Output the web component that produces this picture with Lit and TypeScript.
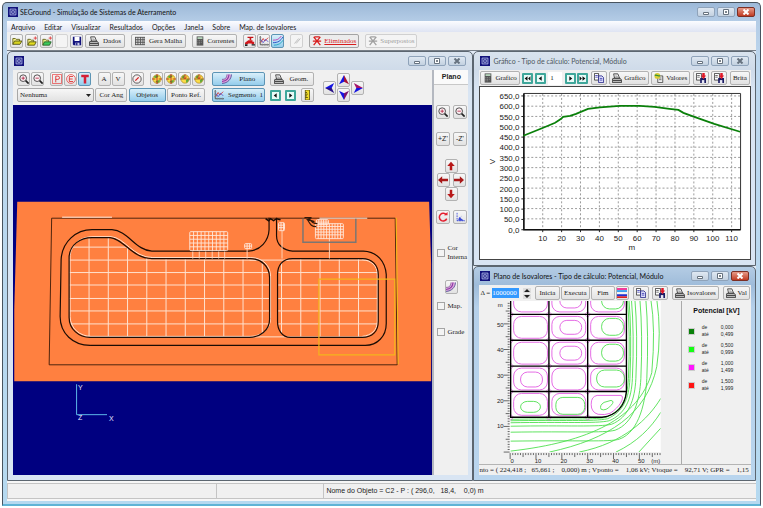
import { LitElement, html, svg, css, nothing } from "lit";
import { customElement, property } from "lit/decorators.js";
import { classMap } from "lit/directives/class-map.js";

const glyphs: Record<string, unknown> = {
  app: svg`<rect width="12" height="12" fill="#12127c"/><path d="M2.5 2.5h7v7h-7z M4.5 4.5h3v3h-3z" fill="none" stroke="#b9c4f0"/>`,
  open: svg`<path d="M1 10V3h3l1 1h4v2" fill="#f4f08a" stroke="#5c5a10"/><path d="M1 10l2-4h9l-2.500 4z" fill="#d8d420" stroke="#4c4a10"/>`,
  openNew: svg`<path d="M1 11V4h3l1 1h3v2" fill="#f4f08a" stroke="#5c5a10"/><path d="M1 11l2-4h8l-2 4z" fill="#e4de20" stroke="#4c4a10"/><path d="M8 2.500h4M10 .5v4" stroke="#e03838"/>`,
  openAdd: svg`<path d="M1 11V4h3l1 1h3v2" fill="#e8f08a" stroke="#5c5a10"/><path d="M1 11l2-4h8l-2 4z" fill="#3ccb5c" stroke="#205c20"/><path d="M8 2.500h4M10 .5v4" stroke="#e03838"/>`,
  save: svg`<path d="M1 1h10v10H2L1 10z" fill="#12127c"/><path d="M3 1h6v5H3z" fill="#fff"/><path d="M4 8h5v3H4z" fill="#c9cce8"/><path d="M5 8h1.500v3H5z" fill="#12127c"/>`,
  printer: svg`<path d="M3 6L2 1h5l2 5z" fill="#fff" stroke="#333"/><path d="M3.500 2.500h3M4 4.200h3" stroke="#777" stroke-width=".7"/><path d="M1 6.500h9l1.500 2v3h-11v-3z" fill="#b8b8b8" stroke="#333"/><path d="M1 9h10" stroke="#333"/>`,
  mesh: svg`<path d="M0 1h12v10H0z" fill="#555"/><path d="M1 2h2v2H1zM4 2h2v2H4zM7 2h2v2H7zM10 2h1.500v2H10zM1 5h2v2H1zM4 5h2v2H4zM7 5h2v2H7zM10 5h1.500v2H10zM1 8h2v2H1zM4 8h2v2H4zM7 8h2v2H7zM10 8h1.500v2H10z" fill="#d6d6d6"/>`,
  calc: svg`<path d="M2 .5h8v11H2z" fill="#555"/><path d="M3 1.500h6v2H3z" fill="#bfe0c4"/><path d="M3 5h1v1H3zM5 5h1v1H5zM7 5h1v1H7zM3 7h1v1H3zM5 7h1v1H5zM7 7h1v1H7zM3 9h1v1H3zM5 9h1v1H5z" fill="#999"/>`,
  tap: svg`<path d="M3 1h7v1.500H7.500V5h-2V2.500H3z" fill="#c4161a"/><path d="M4 5h5v2h2v3H8V9H4l-1 1H0V8z" fill="#d0181c"/><path d="M0 10h3v2H0zM8 10h4v1.500H8z" fill="#222"/>`,
  chart: svg`<path d="M1.500 0v10.500H12" stroke="#444" fill="none"/><path d="M2 8l3-5 2 3 4-4" stroke="#d83030" fill="none"/><path d="M2 4l3 4 3-4 3 3" stroke="#4848c8" fill="none"/><path d="M0 2h3M0 5h3M0 8h3M4 9v3M7 9v3M10 9v3" stroke="#888" stroke-width=".6"/>`,
  curves: svg`<path d="M0 5C5 5 7 4 10 0" stroke="#c030b0" fill="none"/><path d="M0 8C6 8 9 6 12 1" stroke="#1840c0" fill="none"/><path d="M1 11c5 0 9-2 11-6" stroke="#18a0c0" fill="none"/>`,
  pencil: svg`<path d="M3 9l5-6M5 9l5-6" stroke="#b4b4b4" fill="none"/>`,
  strike: svg`<path d="M2 1l8 10M10 1L2 11M1 6h10M3 1h6" stroke="currentColor" stroke-width="1.500" fill="none"/>`,
  zoomIn: svg`<circle cx="5" cy="5" r="4" fill="#fbeef2" stroke="#333"/><path d="M8 8l3.500 3.500" stroke="#222" stroke-width="2"/><path d="M5 3v4M3 5h4" stroke="#b02040"/>`,
  zoomOut: svg`<circle cx="5" cy="5" r="4" fill="#fbeef2" stroke="#333"/><path d="M8 8l3.500 3.500" stroke="#222" stroke-width="2"/><path d="M3 5h4" stroke="#b02040"/>`,
  boxP: svg`<path d="M.5.5h11v11H.5z" fill="none" stroke="#e85050"/><path d="M4.500 10V2.500H7a2 2 0 010 4H4.500" fill="none" stroke="#e02828"/>`,
  ringE: svg`<circle cx="6" cy="6" r="5.300" fill="none" stroke="#e85050"/><path d="M8.500 3H4v6h4.500M4 6h4" fill="none" stroke="#e02828"/>`,
  heavyT: svg`<path d="M1.500 1h9v3h-3v7.500h-3V4h-3z" fill="#d42036"/>`,
  gauge: svg`<circle cx="6" cy="6" r="5" fill="#f7eeee" stroke="#444"/><path d="M4 8l4-4" stroke="#d02020" stroke-width="1.500"/>`,
  globeV: svg`<circle cx="6" cy="6" r="5" fill="#fbdc48" stroke="#a07818" stroke-width=".7"/><path d="M2 4c2-3 5-3 6-1L5 5zM4 9c2-1 4-2 6-1L7 11z" fill="#5fa83a"/><path d="M6 0v12" stroke="#c01818"/><path d="M0 6h4M12 6H8" stroke="#b02c10" fill="none"/>`,
  globeH: svg`<circle cx="6" cy="6" r="5" fill="#fbdc48" stroke="#a07818" stroke-width=".7"/><path d="M2 4c1-2 3-3 4-2L4 6zM7 8c1-2 3-2 4-1L8 11z" fill="#5fa83a"/><path d="M0 6h12" stroke="#8a3a10" stroke-width=".8"/><path d="M6 0v5M4 3l2 3 2-3" stroke="#c01818" fill="none" stroke-width=".8"/>`,
  slab: svg`<path d="M0 6.500C4 6.500 5.500 5 6 .5h5.500c0 6-5 11-11.500 11z" fill="#e3a8dc"/><path d="M0 6.500C4 6.500 5.500 5 6 .5" stroke="#6a3a8a" stroke-width=".8" fill="none"/><path d="M0 9C5 8.500 8 5.500 8.500.5" stroke="#8a3ca8" stroke-width="1.300" fill="none"/><path d="M0 11.300C7 11 11.300 6 11.300.5" stroke="#34408c" stroke-width=".9" fill="none"/>`,
  ruler: svg`<path d="M4 0h5v12H4z" fill="#f0dc28" stroke="#5c5410"/><path d="M4 3h2M4 5h3M4 7h2M4 9h3" stroke="#4c4410"/>`,
  navUp: svg`<path d="M6 0l6 11-6-3z" fill="#a51238"/><path d="M6 0L0 11l6-3z" fill="#1414e0"/>`,
  navDown: svg`<path d="M6 12L0 1l6 3z" fill="#1414e0"/><path d="M6 12l6-11-6 3z" fill="#7a1270"/>`,
  navLeft: svg`<path d="M0 6l11-6-3 6z" fill="#1414e0"/><path d="M0 6l11 6-3-6z" fill="#281088"/>`,
  navRight: svg`<path d="M12 6L1 0l3 6z" fill="#a51268"/><path d="M12 6L1 12l3-6z" fill="#1414e0"/>`,
  redUp: svg`<path d="M6 1l4.500 5H7.500V11h-3V6h-3z" fill="#b81818"/>`,
  redDown: svg`<path d="M6 11l4.500-5H7.500V1h-3v5h-3z" fill="#b81818"/>`,
  redLeft: svg`<path d="M0 6l5-4.500v3h7v3H5v3z" fill="#a81818"/>`,
  redRight: svg`<path d="M12 6L7 1.500v3H0v3h7v3z" fill="#a81818"/>`,
  refresh: svg`<path d="M10 3.500A4.600 4.600 0 1010.500 8" fill="none" stroke="#e42030" stroke-width="1.800"/><path d="M7 4h4.500V0z" fill="#e42030"/>`,
  axes: svg`<path d="M2.500 1v9.500H12M2.500 10.500l5-5" fill="none" stroke="#3848d8" stroke-dasharray="2 1"/><path d="M5 6l6 4.500H4z" fill="#3848d8"/>`,
  prev: svg`<path d="M8 2v8L3 6z" fill="#111"/>`,
  next: svg`<path d="M4 2v8l5-4z" fill="#111"/>`,
  first: svg`<path d="M6 2v8L1 6zM11 2v8L7 6z" fill="#111"/>`,
  last: svg`<path d="M6 2v8l5-4zM1 2v8l4-4z" fill="#111"/>`,
  copy: svg`<path d="M.5.5h5v8h-5z" fill="#fff" stroke="#333"/><path d="M1.500 3h3M1.500 5h3M7 6h3M7 8h3" stroke="#3838b0"/><path d="M5.500 3.500h4l2 2v6h-6z" fill="#dfe0fa" stroke="#24248c"/><path d="M7 6.500h3M7 8.500h3" stroke="#3838b0"/>`,
  export: svg`<path d="M.5.5h6v8h-6z" fill="#fff" stroke="#333"/><path d="M1.500 3h3M1.500 5h3" stroke="#555"/><path d="M5 6h7v6H5z" fill="#1c1c64"/><path d="M7 8.500h3V12H7z" fill="#e8e8f4"/><path d="M7.500 0h3v3H12L9 7.500 6 3h1.500z" fill="#e01828"/>`,
  pages: svg`<path d="M4.500 3.500h6v8h-6z" fill="#eee" stroke="#444"/><path d="M6 6h3M6 8h3" stroke="#666"/><circle cx="4" cy="3.500" r="3.500" fill="#d8cc34"/><path d="M1 3c2-2 4 2 6 0" stroke="#2c8c3c" fill="none" stroke-width="1.500"/>`,
  bands: svg`<path d="M0 0h12v2.500H0z" fill="#f03c9c"/><path d="M0 2.500h12V5H0z" fill="#3ca0f0"/><path d="M0 5h12v2.500H0z" fill="#f4f4f4"/><path d="M0 7.500h12V10H0z" fill="#2030d0"/><path d="M0 10h12v2H0z" fill="#e02020"/>`,
};

const icon = (name: string) =>
  html`<svg class="icon" viewBox="0 0 12 12" aria-hidden="true">${glyphs[name]}</svg>`;

const shared = css`
  * { box-sizing: border-box; }
  .icon { width: 10px; height: 10px; flex: none; display: block; }
  button, input, select { font: inherit; color: inherit; margin: 0; }
  .btn {
    height: 14px; padding: 0 3px; flex: none;
    display: inline-flex; align-items: center; justify-content: center; gap: 4px;
    border: 1px solid #b2b2b2; border-radius: 2px;
    background: linear-gradient(#f7f7f7, #e2e2e2);
    font: 7px/10px "Liberation Serif", serif; color: #222; white-space: nowrap;
  }
  .btn.sq { width: 13px; padding: 0; }
  .btn.on { background: linear-gradient(#d9effa, #94cdec); border-color: #5d95b5; }
  .btn.nav { width: 11px; height: 11px; padding: 0; background: #e9fbf8; border: 2px solid #3fa79b; border-radius: 1px; }
  .btn.nav .icon { width: 7px; height: 7px; }
`;

@customElement("frame-controls")
class FrameControls extends LitElement {
  @property({ type: Boolean }) active = false;
  static styles = [shared, css`
    :host { display: flex; gap: 2px; }
    button { width: 18px; height: 10px; padding: 0; display: grid; place-items: center;
      border: 1px solid #8fa3ba; border-radius: 2px; background: linear-gradient(#dfe8f2, #c3d1e0); }
    .close.active { background: linear-gradient(#e79a88, #c03a22); border-color: #7c2f24; }
    svg { width: 8px; height: 6px; display: block; }
  `];
  render() {
    return html`
      <button aria-label="Minimizar"><svg viewBox="0 0 8 6"><path d="M1.500 3.500h5v2h-5z" fill="#fff" stroke="#66727f"/></svg></button>
      <button aria-label="Maximizar"><svg viewBox="0 0 8 6"><path d="M1.500.5h5v5h-5z" fill="#fff" stroke="#66727f"/><path d="M3.500 2.500h1v1h-1z" stroke="#66727f"/></svg></button>
      <button aria-label="Fechar" class=${classMap({ close: true, active: this.active })}><svg viewBox="0 0 8 6"><path d="M1.500.5l5 5M6.500.5l-5 5" stroke=${this.active ? "#fff" : "#66727f"} stroke-width="2"/></svg></button>`;
  }
}

@customElement("child-window")
class ChildWindow extends LitElement {
  @property() heading = "";
  @property({ type: Boolean, reflect: true }) active = false;
  static styles = [shared, css`
    :host { display: flex; flex-direction: column; min-width: 0; min-height: 0;
      border: 1px solid #5c6670; border-radius: 5px 5px 0 0; padding: 0 4px 5px 5px;
      background: linear-gradient(#d9e3ee, #cfdbe9 18px, #d9e5f3 40px); }
    :host([active]) { background: linear-gradient(#b4cce4, #9fbcda 18px, #b5d0ea 40px, #b9d5ee); }
    header { height: 18px; flex: none; display: flex; align-items: center; gap: 3px; padding: 0 2px 0 1px;
      font: 7px/10px Lato, "Open Sans", sans-serif; color: #4c5660; }
    :host([active]) header { color: #111; }
    .name { flex: 1; min-width: 0; white-space: nowrap; overflow: hidden; }
    .body { flex: 1; min-height: 0; display: flex; flex-direction: column; background: #f0f0f0; }
  `];
  render() {
    return html`<header>${icon("app")}<span class="name">${this.heading}</span>
      <frame-controls ?active=${this.active}></frame-controls></header>
      <div class="body"><slot></slot></div>`;
  }
}

const span = (from: number, to: number, step: number) => {
  const out: number[] = [];
  for (let v = from; v <= to; v += step) out.push(v);
  return out;
};

const hatch = (x: number, y: number, w: number, h: number, step: number) => svg`
  <g stroke="#ffe9dc" stroke-width=".9" fill="none">
    <rect x=${x} y=${y} width=${w} height=${h} rx="1"/>
    ${span(x + step, x + w - 1, step).map((v) => svg`<path d="M${v} ${y}v${h}"/>`)}
    ${span(y + step, y + h - 1, step).map((v) => svg`<path d="M${x} ${v}h${w}"/>`)}
  </g>`;

const leftBay = "M90 338C79 338 69 330 69 318V257C70 245 80 238 92 238H110C124 239 132 259 152 259H250C262 259 270 267 270 278V320C270 331 260 338 250 338Z";
const rightBay = "M293 259H363C373 259 379 266 379 275V322C379 332 373 338 363 338H291C282 338 278 330 278 322V275C278 266 283 259 293 259Z";

const sitePlan = () => svg`
  <path d="M17 202H430L432 265V382H14V310Z" fill="#ff8040"/>
  <path d="M51.500 218.500H396L398 365.500H49L51.500 218.500Z" fill="none" stroke="#3a1a08" stroke-width=".9"/>
  <path d="M62 217.500H112M320 218.500H368" stroke="#ffeee4"/>
  <clipPath id="bays"><path d=${leftBay}/><path d=${rightBay}/></clipPath>
  <g stroke="#ffe1cf" clip-path="url(#bays)">
    ${span(89, 378, 19.3).map((x) => svg`<path d="M${x} 232V338"/>`)}
    ${[247.5, 260.5, 273, 285.5, 299, 311.5, 324.5, 337.5].map((y) => svg`<path d="M66 ${y}H380"/>`)}
  </g>
  <g fill="none" stroke="#ffe1cf"><path d=${leftBay} transform="translate(1 -1)"/><path d="M363 260C372 261 378 266 378 275V322C378 331 372 336 363 337"/><path d="M250 337.500H290M250 260.500H290"/></g>
  <g fill="none" stroke="#1c0c04" stroke-width="1.200">
    <path d="M90 346C73 346 60 334 60 317L61 260C62 242 76 230 92 230H112C128 231 136 251 152 251.500H249C261 251 269 241 269.500 230V218"/>
    <path d="M277 218V236C277 245 284 251 293 251.500H364C378 252 386 262 387 275V324C387 337 378 346 366 346H90"/>
    <path d=${leftBay}/><path d=${rightBay}/>
    <path d="M266 219l3 2 2-2 3 2 3-2 4 1" stroke-width="1.500"/>
  </g>
  ${hatch(190, 232, 38, 19, 3.8)}
  <path d="M193 252V259M199.500 252V259M206 252V259M212.500 252V259M219 252V259M225 252V259M247.500 249V259M282.500 231V259M330 239V259" stroke="#ffd0b4"/>
  ${hatch(245, 244, 7, 5, 2.5)}${hatch(279, 223, 6, 8, 2.5)}
  ${hatch(316, 224, 28, 15, 2.8)}${hatch(317, 220, 12, 5, 2.4)}
  <path d="M303.500 219V242.500H356.500V219" fill="none" stroke="#7c7672" stroke-width="1.500"/>
  <path d="M305 218h7l-4 2 7 2-6-2M308 220c3 5 4 7 9 7M310 219c2 4 4 5 8 5" fill="none" stroke="#33190a" stroke-width="1.200"/>
  <path d="M319.500 279.500H395.500V355.500H319.500ZM397 218L399 365" fill="none" stroke="#f4b41c" stroke-width="1.200"/>
  <path d="M76.500 385V415.500H107" fill="none" stroke="#5cb8e8"/>
  <g class="axisName"><text x="78" y="391">Y</text><text x="78" y="421">Z</text><text x="109" y="422">X</text></g>`;

const profile = () => svg`
  <g stroke="#9a9a9a" stroke-dasharray="2 2">
    ${span(0, 12, 1).map((i) => svg`<path d="M523 ${97 + i * 10.3}H741"/>`)}
    ${span(1, 11, 1).map((i) => svg`<path d="M${523.500 + i * 19} 95V231"/>`)}
  </g>
  <path d="M523.500 94.500H741.500V231.500H523.500Z" fill="none" stroke="#333"/>
  <path d="M523.500 94.500V231.500H741.500" fill="none" stroke="#111" stroke-width="1.500"/>
  <g class="tick end">
    ${span(0, 13, 1).map((i) => svg`<path d="M521 ${97 + i * 10.35}h2" stroke="#222"/><text x="519" y=${100 + i * 10.35}>${650 - i * 50},0</text>`)}
  </g>
  <g class="tick mid">
    ${span(1, 11, 1).map((i) => svg`<path d="M${523.500 + i * 19} 231v3" stroke="#222"/><text x=${523.500 + i * 19} y="243">${i * 10}</text>`)}
    <text x="632" y="252">m</text>
    <text transform="rotate(-90 495 163)" x="495" y="163">V</text>
  </g>
  <path d="M523 137L543 129L555 124L561 120L563 118L570 117L576 115L588 110L600 108.500L620 107L640 107L655 108L670 110L679 111L684 114L695 118L715 125L741 133" fill="none" stroke="#0a800a" stroke-width="1.800"/>`;

const cellsX = [511, 549.5, 588.5, 627.5];
const cellsY = [289, 315.5, 341.5, 367.5, 393, 419];
const loop = (x: number, y: number, w: number, h: number, r: number, c: string) =>
  svg`<rect x=${x} y=${y} width=${w} height=${h} rx=${r} stroke=${c}/>`;

const contours = () => {
  const pink = "#e25ae2", green = "#4ee04e";
  const outer: [number, number][] = [[421, 628.5], [422.5, 630], [424.5, 632.5], [428, 636], [434, 641], [443, 647]];
  return svg`
  <path d="M510 302H662V454H510Z" fill="#fff"/>
  <clipPath id="field"><path d="M510 302H662V454H510Z"/></clipPath>
  <g clip-path="url(#field)" fill="none">
    <g stroke=${green} stroke-width=".9">
      ${outer.map(([l, r]) => svg`<path d="M511 ${l}C${560 + (r - 628)} ${l - 1} ${592 + (r - 628)} ${l + 1} ${607 + (r - 628) * 0.7} ${l - 2}C${622 + (r - 628)} ${l - 9} ${r} 401 ${r + 1} 380Q${r + 3} 335 ${r} 300"/>`)}
      <path d="M511 453C590 444 640 420 653 374Q657 330 652 300M550 454C610 441 648 416 658 368Q663 335 658 300M580 454C625 445 650 420 662 400M617 454C638 444 652 430 662 414M640 454L662 430"/>
    </g>
    <g stroke-width=".9">
      ${cellsY.slice(0, 5).map((y, row) => cellsX.slice(0, 3).map((x, col) => {
        const outline = row === 4 && col === 2
          ? svg`<path d="M598 397H622C626 398 622 408 611 415Q606 417 599 416Q592 414 592 406Q592 398 598 397Z" stroke=${pink}/>
                <path d="M602 411Q600 407 605 404L612 402Q616 403 612 407Q607 413 602 411Z" stroke=${green}/>`
          : svg`${loop(x + 3, y + 2, 34, 22, 8, pink)}
              ${row === 4 ? loop(x + (col ? 7 : 10), y + (col ? 6 : 10), col ? 29 : 20, col ? 17 : 11, 7, green)
                : col === 2 ? loop(x + (row === 3 ? 9 : 14), y + 4, row === 3 ? 28 : 22, 17, 8, green)
                : col === 1 ? (row === 3 ? nothing : loop(x + 11, y + 6, 22, 14, 7, pink))
                : row === 3 ? loop(x + 10, y + 6, 22, 15, 7, pink) : nothing}`;
        return outline;
      }))}
    </g>
    ${cellsX.slice(0, 3).map((x) => cellsY.slice(1).map((y) => svg`<path d="M${x} ${y - 3}L${x + 3} ${y}L${x} ${y + 3}L${x - 3} ${y}Z" stroke=${pink} stroke-width=".7"/>`))}
    <path d="M511 302V419H603C617 417 626 408 627.500 393V302M549.500 302V419M588.500 302V419M511 315.500H627.500M511 341.500H627.500M511 367.500H627.500M511 393H627.500" stroke="#000" stroke-width="1.400"/>
  </g>
  <g stroke="#444" stroke-width=".8">
    ${span(0, 58, 1).map((i) => { const n = i % 10 === 0 ? 6 : i % 5 === 0 ? 4 : 2; return svg`<path d="M${510.500 + i * 2.6} 455v${n}M510 ${454 - i * 2.58}h${-n}"/>`; })}
  </g>
  <g class="scale end">
    ${[50, 40, 30, 20, 10].map((n, i) => svg`<text x="504" y=${328 + i * 25.5}>${n}</text>`)}
    <text x="503" y="308">m</text>
  </g>
  <g class="scale mid">
    ${span(0, 5, 1).map((i) => svg`<text x=${512.500 + i * 26} y="465">${i * 10}</text>`)}
    <text x="657" y="465">(m)</text>
  </g>`;
};

const legend = [
  ["#0a800a", "0,000", "0,499"],
  ["#14ff14", "0,500", "0,999"],
  ["#ff14ff", "1,000", "1,499"],
  ["#ff1414", "1,500", "1,999"],
];

@customElement("app-root")
class AppRoot extends LitElement {
  static styles = [shared, css`
    :host { display: flex; height: 100vh; box-sizing: border-box; padding: 2px; background: #fff;
      font: 7px/10px "Liberation Serif", serif; color: #222; }
    .frame { flex: 1; min-width: 0; display: flex; flex-direction: column; padding: 0 4px 3px;
      border: 1px solid #48545f; border-bottom: 2px solid #5fb4d6; border-radius: 5px 5px 0 0;
      background: linear-gradient(#9db9d8, #b4cce6 18px, #bdd7ee 60px, #b5d9f0); }
    .title { height: 18px; flex: none; display: flex; align-items: center; gap: 2px; padding: 0 1px; font: 7px/10px Lato, "Open Sans", sans-serif; color: #111; }
    .title .name { flex: 1; }
    .menu { height: 11px; flex: none; display: flex; align-items: center; gap: 9px; padding: 0 4px; background: linear-gradient(#fbfcff, #dfe4f3); font: 7px/10px Lato, "Open Sans", sans-serif; }
    .menu a { color: #1a1a1a; text-decoration: none; }
    .tools { height: 18px; flex: none; display: flex; align-items: center; gap: 6px; padding: 0 3px; background: #f0f0f0; overflow: hidden; }
    .tools .snug { gap: 2px; padding: 0 2px; }
    .set { display: flex; gap: 1px; align-items: center; flex: none; }
    .set.wide { gap: 2px; }
    .blank { background: #f4f4f4; border-color: #d4d4d4; }
    .gone { color: #d81c1c; text-decoration: underline; background: #ececec; border-color: #a4a4a4; }
    .dim { color: #a0a0a0; border-color: #d0d0d0; background: #f4f4f4; }
    .desk { flex: 1; display: grid; grid-template-columns: minmax(0, 467fr) minmax(0, 283fr); grid-template-rows: repeat(2, minmax(0, 1fr)); min-height: 0;
      border-top: 1px solid #777f88; background: #e2ebf6; }
    .plan { grid-row: 1 / 3; }
    .split { flex: 1; min-height: 0; display: flex; }
    .main { flex: 1; min-width: 0; display: flex; flex-direction: column; border-right: 2px solid #b4b8c0; }
    .bar { height: 35px; flex: none; display: flex; gap: 7px; padding: 2px 4px; }
    .rows { display: flex; flex-direction: column; gap: 2px; }
    .line { display: flex; justify-content: space-between; align-items: center; }
    .first { width: 188px; }
    .second { width: 102px; }
    .long { width: 53px; }
    .combo { display: grid; align-items: center; }
    .combo > * { grid-area: 1 / 1; }
    .combo select { appearance: none; width: 77px; height: 14px; border: 1px solid #a8a8a8; border-radius: 2px; background: linear-gradient(#f7f7f7, #e2e2e2); padding: 0 2px; }
    .combo svg { width: 5px; height: 3px; justify-self: end; margin-right: 3px; pointer-events: none; }
    .pad { display: grid; grid-template-columns: repeat(3, 14px); align-items: center; margin-left: 2px; }
    .pad .up { grid-area: 1 / 2; } .pad .down { grid-area: 2 / 2; }
    .pad .left { grid-area: 1 / 1 / 3; } .pad .right { grid-area: 1 / 3 / 3; }
    .canvas { flex: 1; min-height: 0; background: #000080; display: flex; }
    .canvas svg, .graph svg, .field svg { width: 100%; height: 100%; display: block; }
    .axisName text { font: 7px "Liberation Sans", sans-serif; fill: #e6e6ff; }
    .side { width: 34px; flex: none; display: flex; flex-direction: column; align-items: center; }
    .tab { width: 100%; height: 15px; background: #fafafa; border-bottom: 1px solid #c8c8c8; margin: 0 0 20px; text-align: center; font: bold 7px/14px "Liberation Sans", sans-serif; }
    .pair { display: flex; gap: 3px; margin-bottom: 13px; }
    .pair .btn { width: 14px; padding: 0; font-family: "Liberation Sans", sans-serif; }
    .cross { display: grid; grid-template-columns: repeat(4, 8px); justify-items: center; margin-bottom: 9px; }
    .cross .up { grid-area: 1 / 2 / 2 / 4; } .cross .down { grid-area: 3 / 2 / 4 / 4; }
    .cross .left { grid-area: 2 / 1 / 3 / 3; } .cross .right { grid-area: 2 / 3 / 3 / 5; }
    .check { align-self: stretch; display: flex; align-items: center; gap: 2px; padding-left: 3px; line-height: 9px; min-height: 10px; }
    .check input { appearance: none; width: 8px; height: 8px; border: 1px solid #a4a4a4; background: #f4f4f4; flex: none; }
    .relief { margin: 18px 0 7px; }
    .near { margin-top: 7px; }
    .spaced { margin-top: 16px; }
    .strip { height: 16px; flex: none; display: flex; align-items: center; justify-content: space-between; padding: 0 1px; overflow: hidden; }
    .strip .btn:not(.sq):not(.nav) { gap: 2px; padding: 0 2px; }
    .num { width: 14px; height: 13px; border: 0; padding: 0 2px; background: #fff; }
    .graph { flex: 1; min-height: 0; border: 1px solid #444; background: #fff; }
    .tick text { font: 8px "Liberation Sans", sans-serif; fill: #222; }
    .scale text { font: 6px "Liberation Sans", sans-serif; fill: #222; }
    .end text { text-anchor: end; } .mid text { text-anchor: middle; }
    .delta { display: flex; align-items: center; gap: 2px; white-space: nowrap; }
    .delta input { width: 27px; height: 10px; border: 0; padding: 0; background: #3399ff; color: #fff; }
    .spin { width: 8px; height: 11px; display: block; }
    .field { flex: 201; min-width: 0; }
    .key { flex: 69; border-left: 1px solid #aaa; padding-top: 6px; }
    .key h2 { margin: 0 0 9px; text-align: center; font: bold 7px/8px "Liberation Sans", sans-serif; white-space: nowrap; color: #111; }
    .range { display: grid; grid-template-columns: 7px 12px 14px; column-gap: 7px; align-items: center; margin: 0 0 4px 6px; font: 5px/7px "Liberation Sans", sans-serif; }
    .range i { width: 7px; height: 7px; border: 1px solid #ccc; }
    .info { height: 11px; flex: none; border-top: 1px solid #b4b4b4; white-space: pre; overflow: hidden; line-height: 10px; }
    .status { height: 20px; flex: none; display: flex; padding: 2px 0; background: #f6f6f6; font: 7px/14px "Liberation Sans", sans-serif; }
    .status div { border: 1px solid #c4c4c4; border-right: 0; background: #f0f0f0; white-space: pre; padding: 0 2px; }
    .s1 { flex: 207; } .s2 { flex: 104; } .s3 { flex: 434; }
  `];

  private tool(name: string, label: string, extra = "") {
    return html`<button class="btn sq ${extra}" aria-label=${label}>${icon(name)}</button>`;
  }
  private nav(name: string, label: string) {
    return html`<button class="btn nav" aria-label=${label}>${icon(name)}</button>`;
  }

  render() {
    return html`<div class="frame">
      <div class="title">${icon("app")}<span class="name">SEGround - Simulação de Sistemas de Aterramento</span><frame-controls active></frame-controls></div>
      <nav class="menu">${["Arquivo", "Editar", "Visualizar", "Resultados", "Opções", "Janela", "Sobre", "Map. de Isovalores"].map((m) => html`<a href="#">${m}</a>`)}</nav>
      <div class="tools">
        <div class="set wide">${this.tool("open", "Abrir")}${this.tool("openNew", "Novo")}${this.tool("openAdd", "Adicionar")}<button class="btn sq blank" aria-label="Vazio"></button>${this.tool("save", "Salvar")}
        <button class="btn">${icon("printer")}Dados</button></div>
        <button class="btn">${icon("mesh")}Gera Malha</button>
        <button class="btn snug">${icon("calc")}Correntes</button>
        <div class="set">${this.tool("tap", "Hidrante")}${this.tool("chart", "Perfil")}${this.tool("curves", "Curvas", "on")}</div>
        ${this.tool("pencil", "Desenhar", "dim")}
        <button class="btn gone snug">${icon("strike")}Eliminados</button>
        <button class="btn dim snug">${icon("strike")}Superpostos</button>
      </div>
      <div class="desk">${this.plan()}${this.graph()}${this.isovalues()}</div>
      <div class="status"><div class="s1"></div><div class="s2"></div><div class="s3">Nome do Objeto = C2 - P : ( 296,0,   18,4,    0,0) m</div></div>
    </div>`;
  }

  private plan() {
    return html`<child-window class="plan"><div class="split">
      <div class="main">
        <div class="bar">
          <div class="rows first">
            <div class="line">
              <div class="set">${this.tool("zoomIn", "Ampliar")}${this.tool("zoomOut", "Reduzir")}</div>
              <div class="set">${this.tool("boxP", "Pontos")}${this.tool("ringE", "Eletrodos")}${this.tool("heavyT", "Todos", "on")}</div>
              <div class="set"><button class="btn sq">A</button><button class="btn sq">V</button></div>
              ${this.tool("gauge", "Medidor")}
              <div class="set">${this.tool("globeV", "Girar 1")}${this.tool("globeV", "Girar 2")}${this.tool("globeH", "Girar 3")}${this.tool("globeH", "Girar 4")}</div>
            </div>
            <div class="line">
              <div class="combo"><select aria-label="Camada"><option>Nenhuma</option></select><svg viewBox="0 0 5 3" aria-hidden="true"><path d="M0 0h5L2.500 3z" fill="#222"/></svg></div>
              <button class="btn">Cor Ang</button><button class="btn on">&nbsp; Objetos &nbsp;</button><button class="btn">Ponto Ref.</button>
            </div>
          </div>
          <div class="rows second">
            <div class="line"><button class="btn on long">${icon("slab")}&nbsp; Plano</button><button class="btn">${icon("printer")}&nbsp;Geom.&nbsp;</button></div>
            <div class="line"><button class="btn on long">${icon("chart")}Segmento &nbsp;1</button>${this.nav("prev", "Anterior")}${this.nav("next", "Próximo")}${this.tool("ruler", "Régua")}</div>
          </div>
          <div class="pad">
            <button class="btn sq up" aria-label="Acima">${icon("navUp")}</button><button class="btn sq down" aria-label="Abaixo">${icon("navDown")}</button>
            <button class="btn sq left" aria-label="Esquerda">${icon("navLeft")}</button><button class="btn sq right" aria-label="Direita">${icon("navRight")}</button>
          </div>
        </div>
        <div class="canvas"><svg viewBox="14 105 418 371" role="img" aria-label="Planta da malha">${sitePlan()}</svg></div>
      </div>
      <div class="side">
        <div class="tab">Plano</div>
        <div class="pair">${this.tool("zoomIn", "Ampliar")}${this.tool("zoomOut", "Reduzir")}</div>
        <div class="pair"><button class="btn">+Z'</button><button class="btn">-Z'</button></div>
        <div class="cross">${this.tool("redUp", "Subir", "up")}${this.tool("redLeft", "Mover à esquerda", "left")}${this.tool("redRight", "Mover à direita", "right")}${this.tool("redDown", "Descer", "down")}</div>
        <div class="pair">${this.tool("refresh", "Redesenhar")}${this.tool("axes", "Eixos")}</div>
        <label class="check near"><input type="checkbox"><span>Cor<br>Interna</span></label>
        ${this.tool("slab", "Relevo", "relief")}
        <label class="check"><input type="checkbox">Map.</label>
        <label class="check spaced"><input type="checkbox">Grade</label>
      </div>
    </div></child-window>`;
  }

  private graph() {
    return html`<child-window heading="Gráfico - Tipo de cálculo: Potencial, Módulo">
      <div class="strip">
        <button class="btn">${icon("calc")}Grafico</button>
        <div class="set wide">${this.nav("first", "Primeiro")}${this.nav("prev", "Anterior")}<input class="num" aria-label="Número" value="1"></div>
        <div class="set">${this.nav("next", "Próximo")}${this.nav("last", "Último")}</div>
        <button class="btn" aria-label="Copiar">${icon("copy")}</button>
        <button class="btn">${icon("printer")}Grafico</button>
        <button class="btn">${icon("pages")}Valores</button>
        <button class="btn" aria-label="Exportar gráfico">${icon("export")}</button>
        <button class="btn" aria-label="Exportar valores">${icon("export")}</button>
        <button class="btn">Brita</button>
      </div>
      <div class="graph"><svg viewBox="481 88 268 173" role="img" aria-label="Potencial por distância">${profile()}</svg></div>
    </child-window>`;
  }

  private isovalues() {
    return html`<child-window active heading="Plano de Isovalores - Tipo de cálculo: Potencial, Módulo">
      <div class="strip">
        <label class="delta">Δ = <input value="1000000"></label>
        <svg class="spin" viewBox="0 0 8 11" aria-hidden="true"><path d="M0 0h8v5H0zM0 6h8v5H0z" fill="#ddd"/><path d="M1 4l3-3 3 3zM1 7l3 3 3-3z" fill="#222"/></svg>
        <div class="set"><button class="btn">&nbsp;Inicia&nbsp;</button><button class="btn">Executa</button><button class="btn">&nbsp; Fim &nbsp;</button>${this.tool("bands", "Faixas")}</div>
        <button class="btn" aria-label="Copiar">${icon("copy")}</button>
        <button class="btn" aria-label="Exportar">${icon("export")}</button>
        <button class="btn">${icon("printer")}Isovalores</button>
        <button class="btn">${icon("printer")}Val</button>
      </div>
      <div class="split">
        <div class="field"><svg viewBox="480 302 201 164" role="img" aria-label="Curvas de isovalores">${contours()}</svg></div>
        <div class="key"><h2>Potencial [kV]</h2>
          ${legend.map(([c, a, b]) => html`<div class="range"><i style="background:${c}"></i><span>de<br>até</span><span>${a}<br>${b}</span></div>`)}
        </div>
      </div>
      <div class="info">nto = ( 224,418 ;   65,661 ;    0,000) m ; Vponto =    1,06 kV; Vtoque =    92,71 V; GPR =    1,15</div>
    </child-window>`;
  }
}
